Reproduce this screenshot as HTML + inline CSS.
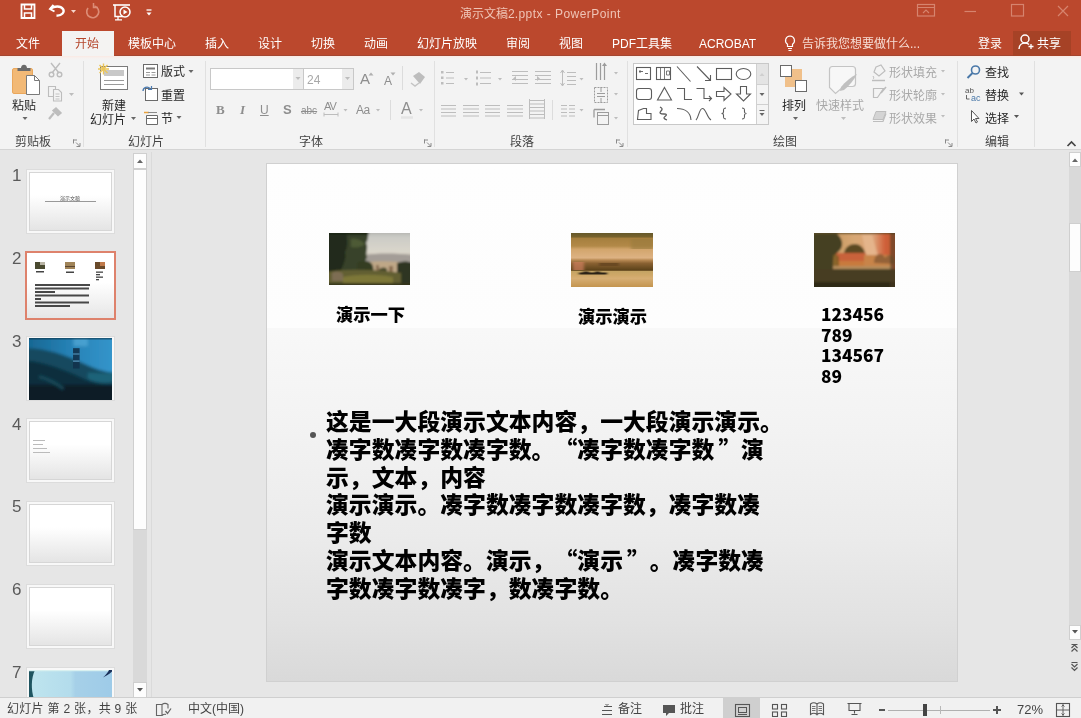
<!DOCTYPE html>
<html lang="zh-CN">
<head>
<meta charset="utf-8">
<title>演示文稿2.pptx - PowerPoint</title>
<style>
*{box-sizing:border-box;margin:0;padding:0}
html,body{width:1081px;height:718px;overflow:hidden;background:#e6e6e6}
body{font-family:"Liberation Sans","Noto Sans CJK SC",sans-serif;font-size:12px;color:#222;position:relative}
.abs{position:absolute}
.blk,.rl,.tab,.num,#status .s,#titlebar .t{will-change:transform}
#titlebar{position:absolute;left:0;top:0;width:1081px;height:56px;background:#bb482d;border-bottom:1px solid #a5452f}
#titlebar .t{position:absolute;color:#efc4b6;font-size:12px;white-space:nowrap;line-height:14px}
.tab{position:absolute;top:37px;color:#fff;font-size:12px;white-space:nowrap;line-height:14px}
#ribbon{position:absolute;left:0;top:56px;width:1081px;height:94px;background:linear-gradient(#fbe9e3 0,#f6f1ef 2px,#f3f3f3 4px);border-bottom:1px solid #d4d4d4}
.rl{position:absolute;font-size:12px;white-space:nowrap;line-height:14px;color:#262626}
.dim{color:#a8a8a8}.dk{color:#8e8e8e}
.sep{position:absolute;top:61px;width:1px;height:86px;background:#e0e0e0}
#work{position:absolute;left:0;top:150px;width:1081px;height:548px;background:#e6e6e6}
#status{position:absolute;left:0;top:697px;width:1081px;height:21px;background:#f1f1f1;border-top:1px solid #cfcfcf}
#status .s{position:absolute;top:4px;font-size:12px;color:#444;white-space:nowrap;line-height:14px}
.num{position:absolute;left:12px;font-size:17px;color:#5a5a5a;line-height:16px}
.th{position:absolute;left:26px;width:89px;height:65px;background:linear-gradient(#fff 40%,#e2e2e2);border:1px solid #dcdcdc;box-shadow:inset 0 0 0 2px #f8f8f8,inset 0 0 0 3px #d6d6d6}
#slide{position:absolute;left:266px;top:163px;width:692px;height:519px;background:linear-gradient(#fefefe 0%,#fdfdfd 31.700%,#f8f8f8 31.800%,#f3f3f3 50%,#ebebeb 72%,#e2e2e2 88%,#d9d9d9 100%);border:1px solid #d0d0d0}
.q{display:inline-block;width:1em;text-align:right}.q2{display:inline-block;width:1.170em;text-align:left;padding-left:4px}
.blk{font-family:"Noto Sans CJK SC","Liberation Sans",sans-serif;font-weight:900;color:#000;position:absolute;white-space:nowrap}
</style>
</head>
<body>
<div id="titlebar">
<!-- quick access icons -->
<svg class="abs" style="left:18px;top:2px" width="140" height="20" viewBox="0 0 140 20" fill="none" stroke="#fff" stroke-width="1.800">
<path d="M3.500 2.500h13v13.500h-13z"/><path d="M6.500 2.500v4.500h7v-4.500" stroke-width="1.500"/><path d="M6.500 15.500v-4.500h7v4.500" stroke-width="1.500"/>
<path d="M35.500 3l-3.500 4 4.500 2.500" stroke-width="2"/><path d="M32.500 6.500c4-2.500 10-3 12.500 .500 2 3-1 7-6.500 6.500" stroke-width="2.300"/>
<path d="M53 8h5l-2.500 3z" fill="#f6d6cc" stroke="none"/>
<path d="M76.500 4a6 6 0 1 1-6.500 2" stroke="#dc8c76" stroke-width="1.700"/><path d="M75.500 1v4.500h4.500" stroke="#dc8c76" stroke-width="1.500"/>
<path d="M95 3h17" stroke-width="1.600"/><path d="M97 3v11.500h8" stroke-width="1.500"/><circle cx="107" cy="10" r="5" stroke-width="1.500"/><path d="M105.500 7.500l4 2.500-4 2.500z" fill="#fff" stroke="none"/><path d="M100 14.500v3M97 17.800h7" stroke-width="1.300"/>
<path d="M128.500 8h5" stroke-width="1.300"/><path d="M128.500 10.500h5l-2.500 3z" fill="#fff" stroke="none"/>
</svg>
<div class="t" style="left:460px;top:7px;font-size:12px">演示文稿2<span style="letter-spacing:.450px">.pptx - PowerPoint</span></div>
<!-- window controls -->
<svg class="abs" style="left:915px;top:0px" width="160" height="22" viewBox="915 0 160 22" fill="none" stroke="#d6846e" stroke-width="1.200">
<rect x="917.500" y="4.500" width="17" height="11.500"/><path d="M917.500 7.500h17" stroke-width="1"/><path d="M923 13l3-3 3 3" stroke-width="1.100"/>
<path d="M964.500 11.500h11.500"/>
<rect x="1011.500" y="4.500" width="12" height="11.500"/>
<path d="M1058 6l10 10M1068 6l-10 10"/>
</svg>
<!-- tabs -->
<div class="abs" style="left:62px;top:31px;width:52px;height:26px;background:#f4f3f2"></div>
<div class="tab" style="left:16px">文件</div>
<div class="tab" style="left:75px;color:#b5472c">开始</div>
<div class="tab" style="left:128px">模板中心</div>
<div class="tab" style="left:205px">插入</div>
<div class="tab" style="left:258px">设计</div>
<div class="tab" style="left:311px">切换</div>
<div class="tab" style="left:364px">动画</div>
<div class="tab" style="left:417px">幻灯片放映</div>
<div class="tab" style="left:506px">审阅</div>
<div class="tab" style="left:559px">视图</div>
<div class="tab" style="left:612px">PDF工具集</div>
<div class="tab" style="left:699px">ACROBAT</div>
<svg class="abs" style="left:783px;top:34px" width="14" height="18" viewBox="0 0 14 18" fill="none" stroke="#fff" stroke-width="1.2"><path d="M7 2a4.500 4.500 0 0 0-2.500 8.200v2.300h5v-2.300A4.500 4.500 0 0 0 7 2z"/><path d="M5 14.500h4M5.500 16.500h3"/></svg>
<div class="tab" style="left:802px;color:#f6ddd5">告诉我您想要做什么...</div>
<div class="tab" style="left:978px">登录</div>
<div class="abs" style="left:1013px;top:31px;width:58px;height:25px;background:#a64226"></div>
<svg class="abs" style="left:1017px;top:33px" width="17" height="18" viewBox="0 0 17 18" fill="none" stroke="#fff" stroke-width="1.5"><circle cx="8" cy="6" r="4"/><path d="M2 16c0-4 3-6 6-6 2 0 3 .500 4 1.500"/><path d="M11.500 13.500h5M14 11v5" stroke-width="1.3"/></svg>
<div class="tab" style="left:1037px">共享</div>
</div>
<div id="ribbon"></div>
<!-- group separators -->
<div class="sep" style="left:83px"></div><div class="sep" style="left:205px"></div><div class="sep" style="left:434px"></div><div class="sep" style="left:627px"></div><div class="sep" style="left:957px"></div><div class="sep" style="left:1034px"></div>
<!-- ribbon labels -->
<div class="rl" style="left:12px;top:99px">粘贴</div>
<div class="rl" style="left:15px;top:135px;color:#444">剪贴板</div>
<div class="rl" style="left:102px;top:99px">新建</div>
<div class="rl" style="left:90px;top:113px">幻灯片</div>
<div class="rl" style="left:161px;top:65px">版式</div>
<div class="rl" style="left:161px;top:89px">重置</div>
<div class="rl" style="left:161px;top:112px">节</div>
<div class="rl" style="left:128px;top:135px;color:#444">幻灯片</div>
<div class="abs" style="left:210px;top:68px;width:94px;height:22px;background:#fff;border:1px solid #c8c8c8"></div>
<div class="abs" style="left:293px;top:69px;width:10px;height:20px;background:#ececec"></div>
<div class="abs" style="left:303px;top:68px;width:51px;height:22px;background:#fff;border:1px solid #c8c8c8"></div>
<div class="abs" style="left:342px;top:69px;width:11px;height:20px;background:#ececec"></div>
<div class="rl dim" style="left:307px;top:73px;font-size:12px">24</div>
<div class="rl dim dk" style="left:360px;top:72px;font-size:15px">A</div>
<div class="rl dim dk" style="left:384px;top:74px;font-size:12px">A</div>
<div class="rl dim dk" style="left:216px;top:103px;font-family:'Liberation Serif',serif;font-weight:bold;font-size:13px">B</div>
<div class="rl dim dk" style="left:240px;top:103px;font-family:'Liberation Serif',serif;font-style:italic;font-weight:bold;font-size:13px">I</div>
<div class="rl dim dk" style="left:260px;top:103px;font-size:12px;text-decoration:underline">U</div>
<div class="rl dim dk" style="left:283px;top:103px;font-size:13px;font-weight:bold">S</div>
<div class="rl dim dk" style="left:301px;top:104px;font-size:10px;text-decoration:line-through">abc</div>
<div class="rl dim dk" style="left:324px;top:99px;font-size:11px;letter-spacing:-1px">AV</div>
<div class="rl dim dk" style="left:356px;top:103px;font-size:12px;letter-spacing:-0.5px">Aa</div>
<div class="rl dim dk" style="left:401px;top:102px;font-size:16px">A</div>
<div class="rl" style="left:299px;top:135px;color:#444">字体</div>
<div class="rl" style="left:510px;top:135px;color:#444">段落</div>
<div class="abs" style="left:633px;top:63px;width:136px;height:62px;background:#fff;border:1px solid #c8c8c8"></div>
<div class="abs" style="left:756px;top:64px;width:12px;height:60px;background:#f4f4f4;border-left:1px solid #d0d0d0"></div>
<div class="abs" style="left:757px;top:64px;width:11px;height:20px;background:#e4e4e4"></div>
<div class="rl" style="left:782px;top:99px">排列</div>
<div class="rl dim" style="left:816px;top:99px">快速样式</div>
<div class="rl dim" style="left:889px;top:66px">形状填充</div>
<div class="rl dim" style="left:889px;top:89px">形状轮廓</div>
<div class="rl dim" style="left:889px;top:112px">形状效果</div>
<div class="rl" style="left:773px;top:135px;color:#444">绘图</div>
<div class="rl" style="left:985px;top:66px">查找</div>
<div class="rl" style="left:985px;top:89px">替换</div>
<div class="rl" style="left:985px;top:112px">选择</div>
<div class="rl" style="left:985px;top:135px;color:#444">编辑</div>
<svg class="abs" style="left:0;top:57px" width="1081" height="94" viewBox="0 57 1081 94" fill="none" stroke-linecap="butt">
<rect x="12.500" y="68.500" width="20" height="25" rx="1.500" fill="#f2b976" stroke="#eaa75c"/>
<path d="M17.500 71v-3h3.500c0-4.500 6-4.500 6 0h3.500v3z" fill="#6a6a6a" stroke="none"/>
<path d="M26.500 75.500h8l5 5v14h-13z" fill="#fff" stroke="#7a7a7a"/><path d="M34.500 75.500v5h5" stroke="#7a7a7a"/>
<path d="M22.500 117h5l-2.500 3z" fill="#666" stroke="none"/>
<g stroke="#bdbdbd" stroke-width="1.4"><path d="M51 63l8 10M60 63l-8 10"/><circle cx="51.500" cy="74.500" r="2.300"/><circle cx="59.500" cy="74.500" r="2.300"/></g>
<g stroke="#bdbdbd" stroke-width="1.1"><path d="M48.500 86.500h7v10h-7z"/><path d="M53.500 89.500h5l3 3v8.500h-8z" fill="#f3f3f3"/><path d="M55.500 94h4M55.500 96.500h4M55.500 99h4" stroke-width="0.9"/></g>
<path d="M69 93h5l-2.5 3.0z" fill="#bdbdbd" stroke="none"/>
<g stroke="#bdbdbd" stroke-width="1.5"><path d="M56 108l5 5-3 2.500-5-5z" fill="#bdbdbd"/><path d="M54 113l-5 6" stroke-width="2.200"/></g>
<path d="M73.5 140.5h-0.5v0M73.0 140h4M73.5 139.5v4" stroke="#8a8a8a" stroke-width="1" fill="none"/><path d="M76.0 142.5l3.5 3.5M80.0 143v3.5h-3.5" stroke="#8a8a8a" stroke-width="1" fill="none"/>
<rect x="100.500" y="66.500" width="27" height="23" fill="#fff" stroke="#7a7a7a"/><rect x="104" y="70" width="20" height="6" fill="#c8c8c8" stroke="none"/><path d="M104 80.500h20M104 84.500h20" stroke="#9a9a9a"/>
<path d="M103.500 63.500v11M98 69h11M99.500 65l8 8M107.500 65l-8 8" stroke="#ecc65a" stroke-width="1.400"/>
<path d="M131 117h5l-2.500 3z" fill="#666" stroke="none"/>
<rect x="143.500" y="64.500" width="14" height="13" fill="#fff" stroke="#6a6a6a"/><path d="M146 68.500h9" stroke="#7a7a7a" stroke-width="2"/><path d="M146 72.500h4M151.500 72.500h4M146 75h4M151.500 75h4" stroke="#9a9a9a"/>
<path d="M188.5 70h5l-2.5 3.0z" fill="#666" stroke="none"/>
<rect x="145.500" y="88.500" width="12" height="12" fill="#fff" stroke="#6a6a6a"/><path d="M143 91a4 4 0 0 1 7-2.500" stroke="#4a7ab0" stroke-width="1.300"/><path d="M151.500 86v3.500h-3.500" stroke="#4a7ab0" stroke-width="1.200"/>
<path d="M144 112.500h5" stroke="#e8a23c" stroke-width="1.500"/><path d="M146.500 115.500h11v9h-11z" fill="#fff" stroke="#6a6a6a"/><path d="M146.500 118.500h11" stroke="#6a6a6a"/><path d="M148 112.500h9" stroke="#8a8a8a"/>
<path d="M176.5 116h5l-2.5 3.0z" fill="#666" stroke="none"/>
<path d="M295.5 77h5l-2.5 3.0z" fill="#bdbdbd" stroke="none"/>
<path d="M345 77h5l-2.5 3.0z" fill="#bdbdbd" stroke="none"/>
<path d="M368.500 75.500l2.500-3 2.500 3z" fill="#b0b0b0" stroke="none"/><path d="M390.500 72.500l2.500 3 2.500-3z" fill="#b0b0b0" stroke="none"/>
<path d="M402.500 66v24" stroke="#dcdcdc"/>
<path d="M413 76l6-4 6 5-5 7z" fill="#bdbdbd" stroke="none"/><path d="M411 83l4 3 4-3" stroke="#c4c4c4" stroke-width="1.500"/>
<path d="M324 114.500h14M324 112.500v4M338 112.500v4" stroke="#bdbdbd" stroke-width="1"/>
<path d="M343.5 109h4l-2.0 2.5z" fill="#bdbdbd" stroke="none"/>
<path d="M376 109h4l-2.0 2.5z" fill="#bdbdbd" stroke="none"/>
<path d="M390.500 100v20" stroke="#dcdcdc"/>
<path d="M401 117.500h12" stroke="#e4e4e4" stroke-width="2.500"/>
<path d="M419 109h4l-2.0 2.5z" fill="#bdbdbd" stroke="none"/>
<path d="M424.5 140.5h-0.5v0M424.0 140h4M424.5 139.5v4" stroke="#8a8a8a" stroke-width="1" fill="none"/><path d="M427.0 142.5l3.5 3.5M431.0 143v3.5h-3.5" stroke="#8a8a8a" stroke-width="1" fill="none"/>
<rect x="441" y="71" width="2.500" height="2.500" fill="#bdbdbd" stroke="none"/><rect x="441" y="76.5" width="2.500" height="2.500" fill="#bdbdbd" stroke="none"/><rect x="441" y="82" width="2.500" height="2.500" fill="#bdbdbd" stroke="none"/>
<path d="M446 72.5h8" stroke="#bdbdbd" stroke-width="1"/><path d="M446 78.0h8" stroke="#bdbdbd" stroke-width="1"/><path d="M446 83.5h8" stroke="#bdbdbd" stroke-width="1"/>
<path d="M464 78h4l-2.0 2.5z" fill="#bdbdbd" stroke="none"/>
<rect x="476" y="70.5" width="2" height="3" fill="#bdbdbd" stroke="none"/><rect x="476" y="76.5" width="2" height="3" fill="#bdbdbd" stroke="none"/><rect x="476" y="82.5" width="2" height="3" fill="#bdbdbd" stroke="none"/>
<path d="M480 72.5h11" stroke="#bdbdbd" stroke-width="1"/><path d="M480 78.0h11" stroke="#bdbdbd" stroke-width="1"/><path d="M480 83.5h11" stroke="#bdbdbd" stroke-width="1"/>
<path d="M498 78h4l-2.0 2.5z" fill="#bdbdbd" stroke="none"/>
<path d="M512 71.5h16" stroke="#bdbdbd" stroke-width="1"/><path d="M512 75.5h16" stroke="#bdbdbd" stroke-width="1"/><path d="M512 79.5h16" stroke="#bdbdbd" stroke-width="1"/><path d="M512 83.5h16" stroke="#bdbdbd" stroke-width="1"/>
<path d="M516 76l-3 2.500 3 2.500z" fill="#bdbdbd" stroke="none"/>
<path d="M535 71.5h16" stroke="#bdbdbd" stroke-width="1"/><path d="M535 75.5h16" stroke="#bdbdbd" stroke-width="1"/><path d="M535 79.5h16" stroke="#bdbdbd" stroke-width="1"/><path d="M535 83.5h16" stroke="#bdbdbd" stroke-width="1"/>
<path d="M537 76l3 2.500-3 2.500z" fill="#bdbdbd" stroke="none"/>
<path d="M567 72.5h9" stroke="#bdbdbd" stroke-width="1"/><path d="M567 76.5h9" stroke="#bdbdbd" stroke-width="1"/><path d="M567 80.5h9" stroke="#bdbdbd" stroke-width="1"/><path d="M567 84.5h9" stroke="#bdbdbd" stroke-width="1"/>
<path d="M562.500 70v16M560.500 73l2-3 2 3M560.500 83l2 3 2-3" stroke="#bdbdbd" stroke-width="1"/>
<path d="M579.500 78h4l-2.0 2.5z" fill="#bdbdbd" stroke="none"/>
<path d="M596.500 63v17M600.500 63v17M604.500 66v14" stroke="#9c9c9c" stroke-width="1.200"/><path d="M602 66l2.500-3.500 2.500 3.500z" fill="#9c9c9c" stroke="none"/>
<path d="M614 72h4l-2.0 2.5z" fill="#bdbdbd" stroke="none"/>
<rect x="594.500" y="87.500" width="13" height="15" stroke="#9c9c9c" stroke-dasharray="2 1"/><path d="M597 93.500h8M597 96.500h8" stroke="#9c9c9c"/><path d="M601 87v5M601 98v5" stroke="#9c9c9c"/>
<path d="M614 93h4l-2.0 2.5z" fill="#bdbdbd" stroke="none"/>
<rect x="597.500" y="112.500" width="11" height="12" stroke="#9c9c9c" fill="#f3f3f3"/><path d="M594 109.500h11M594 109.500v8" stroke="#9c9c9c" stroke-width="1.300"/><path d="M597.500 115.500h11" stroke="#9c9c9c"/>
<path d="M614 117h4l-2.0 2.5z" fill="#bdbdbd" stroke="none"/>
<path d="M441 105.5h15" stroke="#bdbdbd" stroke-width="1"/><path d="M441 109.0h15" stroke="#bdbdbd" stroke-width="1"/><path d="M441 112.5h15" stroke="#bdbdbd" stroke-width="1"/><path d="M441 116.0h15" stroke="#bdbdbd" stroke-width="1"/>
<path d="M463 105.5h16" stroke="#bdbdbd" stroke-width="1"/><path d="M463 109.0h16" stroke="#bdbdbd" stroke-width="1"/><path d="M463 112.5h16" stroke="#bdbdbd" stroke-width="1"/><path d="M463 116.0h16" stroke="#bdbdbd" stroke-width="1"/>
<path d="M485 105.5h15" stroke="#bdbdbd" stroke-width="1"/><path d="M485 109.0h15" stroke="#bdbdbd" stroke-width="1"/><path d="M485 112.5h15" stroke="#bdbdbd" stroke-width="1"/><path d="M485 116.0h15" stroke="#bdbdbd" stroke-width="1"/>
<path d="M507 105.5h16" stroke="#bdbdbd" stroke-width="1"/><path d="M507 109.0h16" stroke="#bdbdbd" stroke-width="1"/><path d="M507 112.5h16" stroke="#bdbdbd" stroke-width="1"/><path d="M507 116.0h16" stroke="#bdbdbd" stroke-width="1"/>
<path d="M529 100.5h16" stroke="#bdbdbd" stroke-width="1"/><path d="M529 104.0h16" stroke="#bdbdbd" stroke-width="1"/><path d="M529 107.5h16" stroke="#bdbdbd" stroke-width="1"/><path d="M529 111.0h16" stroke="#bdbdbd" stroke-width="1"/><path d="M529 114.5h16" stroke="#bdbdbd" stroke-width="1"/><path d="M529 118.0h16" stroke="#bdbdbd" stroke-width="1"/>
<path d="M529.500 99v20M544.500 99v20" stroke="#bdbdbd"/>
<path d="M552.500 100v20" stroke="#dcdcdc"/>
<path d="M561 105.5h6" stroke="#bdbdbd" stroke-width="1"/><path d="M561 109.0h6" stroke="#bdbdbd" stroke-width="1"/><path d="M561 112.5h6" stroke="#bdbdbd" stroke-width="1"/><path d="M561 116.0h6" stroke="#bdbdbd" stroke-width="1"/>
<path d="M569 105.5h6" stroke="#bdbdbd" stroke-width="1"/><path d="M569 109.0h6" stroke="#bdbdbd" stroke-width="1"/><path d="M569 112.5h6" stroke="#bdbdbd" stroke-width="1"/><path d="M569 116.0h6" stroke="#bdbdbd" stroke-width="1"/>
<path d="M579.500 109h4l-2.0 2.5z" fill="#bdbdbd" stroke="none"/>
<path d="M616.5 140.5h-0.5v0M616.0 140h4M616.5 139.5v4" stroke="#8a8a8a" stroke-width="1" fill="none"/><path d="M619.0 142.5l3.5 3.5M623.0 143v3.5h-3.5" stroke="#8a8a8a" stroke-width="1" fill="none"/>
<g stroke="#5c5c5c" stroke-width="1.100" fill="none">
<rect x="636.500" y="67.500" width="14" height="12"/><path d="M639 71.500h4M640 70v3M645 73.500h3" stroke-width="0.9"/>
<rect x="656.500" y="67.500" width="14" height="12"/><path d="M660.500 68v11M664.500 68v11" stroke-width="0.8"/><path d="M666.500 71h3v4h-3z" stroke-width="0.8"/>
<path d="M677 66.500l13.500 15"/>
<path d="M697 66.500l13 13.500M710.500 75v5.500h-5.500"/>
<rect x="716.500" y="68.500" width="15" height="11"/>
<ellipse cx="743.500" cy="74" rx="7.300" ry="5.500"/>
<rect x="636.500" y="88.500" width="15" height="11" rx="2.500"/>
<path d="M664.500 87.500l7 12.500h-14z"/>
<path d="M677 88.500h7.500v11h7.500"/>
<path d="M696.500 88.500h7.500v10h7M709 96l2.500 2.500-2.500 2.500"/>
<path d="M716.500 91.500h7.500v-4l7 6.500-7 6.500v-4h-7.500z"/>
<path d="M740.500 86.500h6v7.500h4l-7 7-7-7h4z"/>
<path d="M638.500 110.500l5-2h3v5h4.500v6h-13.500z"/>
<path d="M660 107c2 1 3 2 1 4s-1 3 3 3c3 0 3 1 1 2.500s-1 2.500 2 3.500" stroke-width="1.300"/>
<path d="M677 108.500c8 0 13.500 4 14 11.500"/>
<path d="M696 120c3-3 3-11.500 6.500-11.500s4 8.500 8.500 11.500"/>
<path d="M726 108c-2.500 0-2.500 1-2.500 2.500v1.500c0 1.500-1 1.500-2 1.500 1 0 2 0 2 1.500v1.500c0 1.500 0 2.500 2.500 2.500"/>
<path d="M742 108c2.500 0 2.500 1 2.500 2.500v1.500c0 1.500 1 1.500 2 1.500-1 0-2 0-2 1.500v1.500c0 1.500 0 2.500-2.500 2.500"/>
</g>
<path d="M759.500 76l2.500-3 2.500 3z" fill="#cfcfcf"/>
<path d="M756 84.500h12M756 104.500h12" stroke="#d0d0d0"/>
<path d="M759.5 93h5l-2.5 3.0z" fill="#666" stroke="none"/>
<path d="M759.500 110.500h5" stroke="#666"/><path d="M759.5 113h5l-2.5 3.0z" fill="#666" stroke="none"/>
<rect x="785" y="69" width="17" height="18" fill="#f0c08a" stroke="none"/><rect x="780.500" y="65.500" width="11" height="11" fill="#fff" stroke="#6a6a6a"/><rect x="795.500" y="80.500" width="11" height="11" fill="#fff" stroke="#6a6a6a"/>
<path d="M793 117h5l-2.500 3z" fill="#666" stroke="none"/>
<path d="M829.500 69.500q0-3 3-3h20q3 0 3 3v14q0 3-3 3h-9l-8 7-6-6z" fill="#f7f7f7" stroke="#c4c4c4" stroke-width="1.200"/><path d="M857 74c-3 6-8 12-13 16l-4 1 1-4c4-5 10-10 16-13z" fill="#c0c0c0" stroke="none"/>
<path d="M841 117h5l-2.500 3z" fill="#bdbdbd" stroke="none"/>
<path d="M876 67l5-2 4 6-6 5-5-4z" stroke="#bdbdbd" fill="none" stroke-width="1.200"/><path d="M873 76c1 1.500 1 2.500 0 3" stroke="#bdbdbd"/><path d="M872 80.500h13" stroke="#bdbdbd" stroke-width="1.500"/>
<path d="M941 70h4l-2.0 2.5z" fill="#bdbdbd" stroke="none"/>
<path d="M873.500 88.500h10l-6 9h-4z" stroke="#bdbdbd" fill="none" stroke-width="1.200"/><path d="M881 93l5-6" stroke="#bdbdbd" stroke-width="1.600"/>
<path d="M941 93h4l-2.0 2.5z" fill="#bdbdbd" stroke="none"/>
<path d="M876 111.500h10l-3 8h-10z" fill="#d4d4d4" stroke="#bdbdbd"/><path d="M873 121.500h10l3-8" stroke="#bdbdbd" stroke-width="1.200"/>
<path d="M941 115h4l-2.0 2.5z" fill="#bdbdbd" stroke="none"/>
<path d="M945.0 140h4M945.5 139.5v4" stroke="#8a8a8a" stroke-width="1" fill="none"/><path d="M948.0 142.5l3.5 3.5M952.0 143v3.500h-3.500" stroke="#8a8a8a" stroke-width="1" fill="none"/>
<circle cx="975.500" cy="70" r="4" stroke="#4a78a8" stroke-width="1.600"/><path d="M972.500 73l-5 5" stroke="#4a78a8" stroke-width="2"/>
<text x="965" y="93" font-family="Liberation Sans,sans-serif" font-size="8" fill="#555" stroke="none">ab</text><text x="971" y="101" font-family="Liberation Sans,sans-serif" font-size="9" fill="#4a78a8" stroke="none">ac</text><path d="M966.500 95v4h3" stroke="#555" stroke-width="0.9"/>
<path d="M1019 92.5h5l-2.5 3.0z" fill="#555" stroke="none"/>
<path d="M971.500 110.500v11l2.500-2.500 2 4 1.500-1-2-3.500h3.500z" fill="#fff" stroke="#555" stroke-width="1"/>
<path d="M1014 115h5l-2.5 3.0z" fill="#555" stroke="none"/>
<path d="M1067.500 146l4-4 4 4" stroke="#444" stroke-width="1.700" fill="none"/>
</svg>
<div id="work"></div>
<!-- thumbnail pane -->
<div class="abs" style="left:151px;top:152px;width:1px;height:546px;background:#dadada"></div>
<div class="abs" style="left:133px;top:153px;width:14px;height:545px;background:#d9d9d9"></div>
<div class="abs" style="left:133px;top:153px;width:14px;height:16px;background:#fdfdfd;border:1px solid #cfcfcf"></div>
<div class="abs" style="left:133px;top:169px;width:14px;height:361px;background:#fdfdfd;border:1px solid #cfcfcf"></div>
<div class="abs" style="left:133px;top:682px;width:14px;height:16px;background:#fdfdfd;border:1px solid #cfcfcf"></div>
<svg class="abs" style="left:133px;top:153px" width="14" height="545" viewBox="0 0 14 545"><path d="M4 10l3-3.500 3 3.500z" fill="#666"/><path d="M4 535l3 3.500 3-3.500z" fill="#555"/></svg>
<div class="num" style="top:168px">1</div>
<div class="th" style="top:169px"><div class="abs" style="left:18px;top:31px;width:51px;height:1px;background:#999"></div><div class="abs" style="left:33px;top:25px;font-size:5px;line-height:6px;color:#555;white-space:nowrap">演示文稿</div></div>
<div class="num" style="top:251px">2</div>
<div class="abs" style="left:25px;top:251px;width:91px;height:69px;border:2px solid #de826c;background:linear-gradient(#fff 45%,#e6e6e6)"></div>
<svg class="abs" style="left:27px;top:253px" width="87" height="65" viewBox="0 0 87 65">
<rect x="8" y="9" width="10" height="7" fill="#4a4a30"/><rect x="13" y="9" width="5" height="3" fill="#b8b4a4"/>
<rect x="38" y="9" width="10" height="7" fill="#a08458"/><rect x="38" y="13" width="10" height="1" fill="#5a4630"/>
<rect x="68" y="9" width="10" height="7" fill="#6a4a2a"/><rect x="73" y="9" width="5" height="4" fill="#c07a4a"/>
<g fill="#444"><rect x="9" y="18" width="8" height="1.500"/><rect x="39" y="18.500" width="8" height="1.500"/><rect x="69" y="18.500" width="7" height="1.300"/><rect x="69" y="21" width="4" height="1.300"/><rect x="69" y="23.500" width="7" height="1.300"/><rect x="69" y="26" width="3" height="1.300"/></g>
<g fill="#2a2a2a" opacity=".85"><rect x="8" y="31" width="55" height="2"/><rect x="8" y="34.500" width="54" height="2"/><rect x="8" y="38" width="20" height="2"/><rect x="8" y="41.500" width="54" height="2"/><rect x="8" y="45" width="6" height="2"/><rect x="8" y="48.500" width="54" height="2"/><rect x="8" y="52" width="35" height="2"/></g>
</svg>
<div class="num" style="top:334px">3</div>
<div class="th" style="top:336px;height:65px;border-color:#dcdcdc"><svg class="abs" style="left:2px;top:1px" width="83" height="62" viewBox="0 0 82 61" preserveAspectRatio="none">
<defs><filter id="b4" x="-10%" y="-10%" width="120%" height="120%"><feGaussianBlur stdDeviation="1.600"/></filter><clipPath id="c4"><rect width="82" height="61"/></clipPath>
<linearGradient id="g4" x1="0" y1="0" x2="1" y2="0"><stop offset="0" stop-color="#176590"/><stop offset=".5" stop-color="#2682b6"/><stop offset="1" stop-color="#3596cc"/></linearGradient></defs>
<g clip-path="url(#c4)"><g filter="url(#b4)">
<rect x="-4" y="-4" width="90" height="69" fill="url(#g4)"/>
<path d="M-4 10c20 0 40 6 60 16 12 6 22 8 30 8v35H-4z" fill="#12485e"/>
<path d="M-4 22c20 2 40 10 58 18 12 5 22 6 32 6v20H-4z" fill="#0c2e3e"/>
<path d="M-4 46h90v20H-4z" fill="#091c28"/>
<path d="M58 34c8 0 16 2 28 0v8c-10 3-20 2-28-2z" fill="#1d6a80" opacity=".8"/>
<path d="M10 38c8 2 16 6 24 12" stroke="#1f5a6a" stroke-width="3" fill="none" opacity=".7"/>
<path d="M44 -4h14v12H44z" fill="#5ab0dc" opacity=".6"/>
</g>
<path d="M43.500 10h6.500v20h-6.500z" fill="#12324c" opacity=".9"/><path d="M43.500 15h6.500v1.500h-6.500zM43.500 22h6.500v1.500h-6.500z" fill="#4f8fb4" opacity=".8"/>
<path d="M0 0h82v1.500H0z" fill="#0e3448" opacity=".6"/>
</g></svg></div>
<div class="num" style="top:417px">4</div>
<div class="th" style="top:418px"><div class="abs" style="left:6px;top:21px;width:12px;height:1px;background:#bbb"></div><div class="abs" style="left:6px;top:25px;width:10px;height:1px;background:#bbb"></div><div class="abs" style="left:6px;top:29px;width:14px;height:1px;background:#bbb"></div><div class="abs" style="left:6px;top:33px;width:17px;height:1px;background:#bbb"></div></div>
<div class="num" style="top:499px">5</div>
<div class="th" style="top:501px"></div>
<div class="num" style="top:582px">6</div>
<div class="th" style="top:584px"></div>
<div class="num" style="top:665px">7</div>
<div class="th" style="top:667px;height:31px;border-bottom:none;background:#f6f6f6"><svg class="abs" style="left:2px;top:2px" width="83" height="29" viewBox="0 0 83 29" preserveAspectRatio="none">
<defs><linearGradient id="g7" x1="0" y1="0" x2="1" y2="0"><stop offset="0" stop-color="#bfe5ee"/><stop offset=".5" stop-color="#b3dcec"/><stop offset=".56" stop-color="#a6d0e8"/><stop offset="1" stop-color="#9ecbe8"/></linearGradient></defs>
<rect width="83" height="29" fill="url(#g7)"/>
<path d="M0 0h6c-4 8-4 20-1 29H0z" fill="#1f5560"/>
<path d="M0 0h83v1.200H0z" fill="#d8f0f0"/>
<path d="M83 0v1.500c-3 3-6 4-9 6 3-3 5-5 6-7.500z" fill="#1a2f58"/>
</svg></div>
<!-- right scrollbar -->
<div class="abs" style="left:1069px;top:152px;width:12px;height:488px;background:#d9d9d9"></div>
<div class="abs" style="left:1069px;top:152px;width:12px;height:15px;background:#fdfdfd;border:1px solid #cfcfcf"></div>
<div class="abs" style="left:1069px;top:223px;width:12px;height:49px;background:#fdfdfd;border:1px solid #cfcfcf"></div>
<div class="abs" style="left:1069px;top:625px;width:12px;height:15px;background:#fdfdfd;border:1px solid #cfcfcf"></div>
<svg class="abs" style="left:1068px;top:152px" width="13" height="546" viewBox="0 0 13 546"><path d="M4 10l3-3.500 3 3.500z" fill="#666"/><path d="M4 478l3 3.500 3-3.500z" fill="#555"/><path d="M3.500 492.500h6M3.500 496l3-3 3 3M3.500 499.500l3-3 3 3" stroke="#555" fill="none" stroke-width="1.200"/><path d="M3.500 510.500h6M3.500 512l3 3 3-3M3.500 515.500l3 3 3-3" stroke="#555" fill="none" stroke-width="1.200"/></svg>

<div id="slide"></div>
<!-- picture 1: landscape -->
<svg class="abs" style="left:329px;top:233px" width="81" height="52" viewBox="0 0 81 52">
<defs><filter id="b1" x="-10%" y="-10%" width="120%" height="120%"><feGaussianBlur stdDeviation="1.100"/></filter>
<linearGradient id="p1s" x1="0" y1="0" x2="0" y2="1"><stop offset="0" stop-color="#a9aaa6"/><stop offset=".25" stop-color="#cbcbc6"/><stop offset=".8" stop-color="#dad6cb"/><stop offset="1" stop-color="#cfc8bb"/></linearGradient>
<clipPath id="c1"><rect width="81" height="52"/></clipPath></defs>
<g clip-path="url(#c1)"><g filter="url(#b1)">
<rect x="-3" y="-3" width="87" height="58" fill="#4a5230"/>
<rect x="34" y="-3" width="50" height="27" fill="url(#p1s)"/>
<path d="M36 22c12-2 30-2 48 0v9H36z" fill="#a39d97"/>
<path d="M36 29c10-1 24-1 36 0v13H36z" fill="#bfa787"/>
<path d="M38 31h4v9h-4zM47 32h3v8h-3zM60 33h4v8h-4z" fill="#8a6e52"/>
<path d="M68 30c5-2 10-2 16 0v25H68z" fill="#2f3422"/>
<path d="M-3 -3h44c-3 5-1 9-4 13 3 5-1 9 1 14-2 6-6 10-10 16L-3 44z" fill="#38432a"/>
<path d="M-3 -3h22c-3 6 2 14-3 22 2 8-3 14-5 22L-3 44z" fill="#242c1b"/>
<path d="M-3 -3h42v5h-42z" fill="#1f2618"/>
<path d="M22 6c5-1 10 1 14 5-4 3-8 4-14 3z" fill="#4e5a36"/><path d="M28 30c4-3 10-3 14 0 3 3 3 8 1 12H28z" fill="#343c24"/><path d="M50 36c3-2 6-2 8 0v6h-8z" fill="#4a4a2c"/>
<path d="M-3 39c18-3 48-3 75 1v15H-3z" fill="#625f32"/>
<path d="M14 44c14-3 34-3 50 0v6H14z" fill="#7d7739"/>
<path d="M3 40c4-2 8-2 11 1v7H3z" fill="#84705a" opacity=".8"/>
<path d="M-3 50h87v5h-87z" fill="#34361f"/>
</g></g>
</svg>
<!-- picture 2: shore -->
<svg class="abs" style="left:571px;top:233px" width="82" height="54" viewBox="0 0 82 54">
<defs><filter id="b2" x="-10%" y="-10%" width="120%" height="120%"><feGaussianBlur stdDeviation="1.400 0.500"/></filter>
<linearGradient id="p2" x1="0" y1="0" x2="0" y2="1"><stop offset="0" stop-color="#65582a"/><stop offset=".07" stop-color="#77622c"/><stop offset=".1" stop-color="#a67f3e"/><stop offset=".24" stop-color="#b28948"/><stop offset=".3" stop-color="#d2a56c"/><stop offset=".46" stop-color="#ddb283"/><stop offset=".5" stop-color="#b98a54"/><stop offset=".56" stop-color="#8a6232"/><stop offset=".66" stop-color="#66491f"/><stop offset=".69" stop-color="#5a4018"/><stop offset=".71" stop-color="#c4a464"/><stop offset=".78" stop-color="#cfa868"/><stop offset=".84" stop-color="#d6ae74"/><stop offset="1" stop-color="#c4954f"/></linearGradient>
<clipPath id="c2"><rect width="82" height="54"/></clipPath></defs>
<g clip-path="url(#c2)"><rect width="82" height="54" fill="url(#p2)"/>
<g filter="url(#b2)">
<path d="M2 29h11v8H2z" fill="#cf7f5e" opacity=".7"/>
<path d="M28 30h20v3H28z" fill="#6a4a22"/>
<path d="M8 39.500h28v2H8z" fill="#2a2414"/>
<path d="M12 38.500h6v2h-6zM24 38.500h5v2h-5z" fill="#2a2414"/>
<path d="M60 6h22v10H60z" fill="#9a7a3e" opacity=".6"/>
</g></g>
</svg>
<!-- picture 3: sunset -->
<svg class="abs" style="left:814px;top:233px" width="81" height="54" viewBox="0 0 81 54">
<defs><filter id="b3" x="-10%" y="-10%" width="120%" height="120%"><feGaussianBlur stdDeviation="1.100"/></filter>
<linearGradient id="p3" x1="0" y1="0" x2="1" y2="0"><stop offset="0" stop-color="#b88a50"/><stop offset=".5" stop-color="#d8a874"/><stop offset=".72" stop-color="#dca278"/><stop offset=".85" stop-color="#d0603a"/><stop offset="1" stop-color="#b85a30"/></linearGradient>
<clipPath id="c3"><rect width="81" height="54"/></clipPath></defs>
<g clip-path="url(#c3)"><g filter="url(#b3)">
<rect x="-3" y="-3" width="87" height="60" fill="url(#p3)"/>
<path d="M48 2l10 0 6 20h-12z" fill="#e8bc94" opacity=".7"/>
<path d="M22 20h30v14H22z" fill="#c8623a"/>
<path d="M22 28h30v6H22z" fill="#c87a3c"/>
<path d="M50 22h28v11H50z" fill="#c88448"/>
<path d="M30 20c1-6 6-9 11-9s9 4 10 9z" fill="#5c4a22"/>
<path d="M60 30c0-6 3-9 6-9s4 2 5 4c2-3 5-4 7-2s3 5 3 8z" fill="#946238"/>
<path d="M18 33h60v3H18z" fill="#b48c5c"/>
<path d="M-3 -3h18c6 1 12 6 13 12s-3 9-6 12-3 10-3 17H-3z" fill="#453f22"/><path d="M19 22c3-1 5 0 6 2v9h-6z" fill="#7a5a22" opacity=".8"/>
<path d="M-3 -3h87v4h-87z" fill="#5a4c26"/>
<path d="M-3 36h87v21h-87z" fill="#463d20"/>
<path d="M-3 49h87v8h-87z" fill="#2f2a18"/>
<path d="M76 -3h8v60h-8z" fill="#4a3a20" opacity=".55"/>
</g></g>
</svg>
<div class="blk" style="left:336px;top:302px;font-size:17.300px;line-height:24px">演示一下</div>
<div class="blk" style="left:578px;top:304px;font-size:17.300px;line-height:24px">演示演示</div>
<div class="blk" style="left:821px;top:304px;font-size:17.300px;line-height:20.600px">123456<br>789<br>134567<br>89</div>
<div class="abs" style="left:310px;top:432px;width:6px;height:6px;border-radius:3px;background:#555"></div>
<div class="blk" style="left:326px;top:407px;font-size:22.850px;line-height:27.800px">这是一大段演示文本内容，一大段演示演示。<br>凑字数凑字数凑字数。<span class="q">“</span>凑字数凑字数<span class="q2">”</span>演<br>示，文本，内容<br>演示演示。凑字数凑字数凑字数，凑字数凑<br>字数<br>演示文本内容。演示，<span class="q">“</span>演示<span class="q2">”</span>。凑字数凑<br>字数凑字数凑字，数凑字数。</div>

<div id="status">
<div class="s" style="left:7px;letter-spacing:.300px">幻灯片 第 2 张，共 9 张</div>
<svg class="abs" style="left:155px;top:4px" width="18" height="16" viewBox="0 0 18 16" fill="none" stroke="#666" stroke-width="1.100"><path d="M1.500 2.500h5.500v11h-5.500zM7 2.500c2-1.500 4-1.500 6 0v4M7 13.500c2-1.500 3-1.500 4-1"/><path d="M10.500 9l2 2.500 3.500-5" stroke-width="1.300"/></svg>
<div class="s" style="left:188px">中文(中国)</div>
<svg class="abs" style="left:600px;top:5px" width="14" height="14" viewBox="0 0 14 14" fill="none" stroke="#555" stroke-width="1.200"><path d="M4 3.500h8M2 7.500h10M2 11.500h10"/><path d="M5.500 1l1.500 1.500 1.500-1.500" stroke-width="1"/></svg>
<div class="s" style="left:618px">备注</div>
<svg class="abs" style="left:662px;top:5px" width="14" height="14" viewBox="0 0 14 14"><path d="M1 2h12v8h-6l-3 3v-3h-3z" fill="#555"/></svg>
<div class="s" style="left:680px">批注</div>
<div class="abs" style="left:723px;top:0;width:37px;height:20px;background:#cfcfcf"></div>
<svg class="abs" style="left:733px;top:3px" width="130" height="16" viewBox="0 0 130 16" fill="none" stroke="#555" stroke-width="1.100"><rect x="2.500" y="3.500" width="14" height="12"/><rect x="5.500" y="6.500" width="8" height="5" stroke-width="1"/><path d="M5 13.500h9" stroke-width="1"/>
<rect x="39.500" y="3.500" width="5" height="4.500"/><rect x="48.500" y="3.500" width="5" height="4.500"/><rect x="39.500" y="11" width="5" height="4.500"/><rect x="48.500" y="11" width="5" height="4.500"/>
<path d="M77.500 3c2-1.500 4.500-1.500 6.500 0v10.500c-2-1.500-4.500-1.500-6.500 0zM84 3c2-1.500 4.500-1.500 6.500 0v10.500c-2-1.500-4.500-1.500-6.500 0z"/><path d="M79 5.500h3.500M79 7.500h3.500M79 9.500h3.500M85.500 5.500h3.500M85.500 7.500h3.500M85.500 9.500h3.500" stroke-width="0.800"/>
<path d="M114.500 2.500h14M116 2.500v7h11v-7M121.500 9.500v3M118.500 13.500h6"/></svg>
<div class="abs" style="left:879px;top:11px;width:6px;height:2px;background:#555"></div>
<div class="abs" style="left:888px;top:11.500px;width:102px;height:1px;background:#b0b0b0"></div>
<div class="abs" style="left:940px;top:8px;width:1px;height:8px;background:#b8b8b8"></div>
<div class="abs" style="left:923px;top:6px;width:4px;height:12px;background:#444"></div>
<div class="abs" style="left:993px;top:11px;width:8px;height:2px;background:#555"></div><div class="abs" style="left:996px;top:8px;width:2px;height:8px;background:#555"></div>
<div class="s" style="left:1017px;font-size:13px;top:4.500px">72%</div>
<svg class="abs" style="left:1055px;top:4px" width="16" height="16" viewBox="0 0 16 16" fill="none" stroke="#555" stroke-width="1.100"><rect x="1.500" y="1.500" width="13" height="13"/><path d="M8 1.500v13M1.500 8h13" stroke-width="0.900"/><path d="M6.500 4.500l1.500-1.500 1.500 1.500M6.500 11.500l1.500 1.500 1.500-1.500" stroke-width="0.900"/></svg>
</div>
</body>
</html>
